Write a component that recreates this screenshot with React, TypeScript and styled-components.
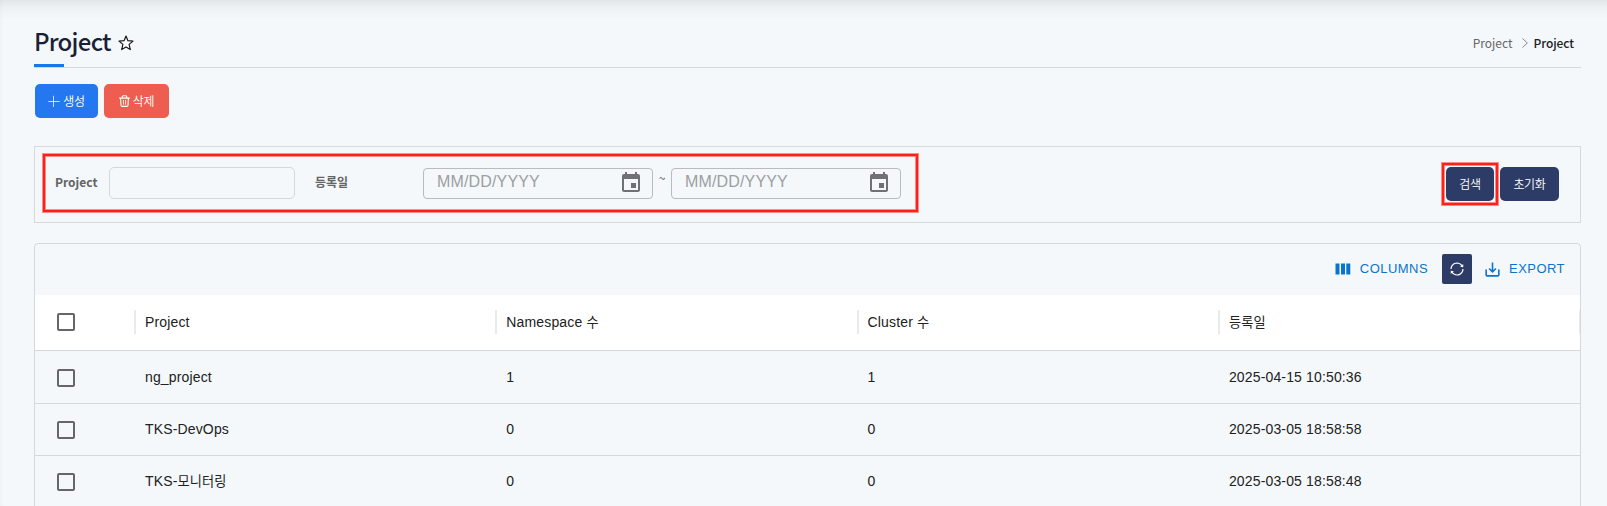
import React from 'react';
import styled, { createGlobalStyle, css } from 'styled-components';
import { AiOutlineSync } from 'react-icons/ai';

const kr = `"Noto Sans CJK KR", "Noto Sans", sans-serif`;
const latin = `"Liberation Sans", "Noto Sans CJK KR", sans-serif`;
const line = '#d6d9db';

const GlobalStyle = createGlobalStyle`
  * { box-sizing: border-box; }
  body { margin: 0; background: #f4f8fb; overflow: hidden; }
`;

const Page = styled.main`
  height: 506px;
  padding: 0 26px 0 34px;
  overflow: hidden;
  font-family: ${kr};
  color: #212121;
  background:
    linear-gradient(to bottom, rgba(60, 70, 75, 0.1), rgba(60, 70, 75, 0.035) 8px, rgba(60, 70, 75, 0) 20px),
    linear-gradient(to right, rgba(60, 70, 75, 0.025), rgba(60, 70, 75, 0) 4px),
    #f4f8fb;
`;

const PageHeader = styled.header`
  position: relative;
  height: 68px;
  border-bottom: 1px solid #d3d8dd;
  display: flex;
  align-items: flex-start;
  justify-content: space-between;
  &::after {
    content: '';
    position: absolute;
    left: 0;
    bottom: 0;
    width: 30px;
    height: 3px;
    background: #1977ee;
  }
`;

const TitleGroup = styled.div`
  display: flex;
  align-items: center;
  gap: 7px;
  padding-top: 23px;
  svg { margin-top: 3px; }
`;

const Title = styled.h1`
  margin: 0;
  font-size: 24px;
  line-height: 36px;
  font-weight: 500;
  letter-spacing: -0.75px;
  color: #1b1f36;
`;

const Breadcrumb = styled.nav`
  display: flex;
  align-items: center;
  padding: 33px 7px 0 0;
  font-size: 12px;
  line-height: 20px;
  color: #666;
  svg { margin: 0 6px 0 9px; }
  strong { font-weight: 500; letter-spacing: -0.08px; color: #222; }
`;

const Actions = styled.div`
  display: flex;
  gap: 6px;
  padding: 16px 0 0 1px;
`;

const Button = styled.button<{ $bg: string; $w: number }>`
  display: flex;
  align-items: center;
  justify-content: center;
  gap: 3px;
  width: ${(p) => p.$w}px;
  height: 34px;
  padding: 0;
  border: 0;
  border-radius: 5px;
  background: ${(p) => p.$bg};
  color: #fff;
  font: 350 12px/18px ${kr};
  letter-spacing: -0.3px;
`;

const SearchPanel = styled.section`
  position: relative;
  display: flex;
  align-items: flex-start;
  height: 77px;
  margin-top: 28px;
  padding: 20px 21px 0 20px;
  border: 1px solid #d8d9da;
`;

const Label = styled.label<{ $w: number }>`
  width: ${(p) => p.$w}px;
  font-size: 12px;
  line-height: 30px;
  font-weight: 700;
  color: #646464;
`;

const TextInput = styled.input`
  width: 186px;
  height: 32px;
  margin-right: 20px;
  border: 1px solid #d5d8da;
  border-radius: 5px;
  background: transparent;
`;

const DateField = styled.div`
  display: flex;
  align-items: center;
  justify-content: space-between;
  width: 230px;
  height: 31px;
  margin-top: 1px;
  padding: 0 9px 0 13px;
  border: 1px solid #b9bcbe;
  border-radius: 4px;
  font: 16px/26px ${latin};
  letter-spacing: 0.15px;
  color: #9c9fa1;
  span { margin-top: -3px; }
  svg { margin-top: -2px; }
`;

const Tilde = styled.span`
  width: 18px;
  text-align: center;
  font-size: 12px;
  line-height: 22px;
  color: #555;
`;

const SearchButtons = styled.div`
  display: flex;
  gap: 6px;
  margin-left: auto;
`;

const Highlight = styled.div<{ $x: number; $y: number; $w: number; $h: number }>`
  position: absolute;
  left: ${(p) => p.$x}px;
  top: ${(p) => p.$y}px;
  width: ${(p) => p.$w}px;
  height: ${(p) => p.$h}px;
  border: 2px solid #ff2119;
  box-shadow: 0 0 0 1px rgba(255, 33, 25, 0.5), inset 0 0 0 1px rgba(255, 33, 25, 0.5);
  pointer-events: none;
`;

const Grid = styled.section`
  height: 280px;
  margin-top: 20px;
  border: 1px solid ${line};
  border-radius: 4px;
  font-family: ${latin};
  font-size: 14px;
  letter-spacing: 0.15px;
`;

const Toolbar = styled.div`
  display: flex;
  align-items: center;
  justify-content: flex-end;
  height: 51px;
  padding: 0 15px 1px 0;
`;

const ToolButton = styled.button`
  display: flex;
  align-items: center;
  gap: 7px;
  padding: 0;
  border: 0;
  background: none;
  color: #0b74c9;
  font: 13px/20px ${latin};
  letter-spacing: 0.46px;
`;

const RefreshButton = styled.button`
  display: grid;
  place-items: center;
  width: 30px;
  height: 30px;
  margin: 0 11px 0 14px;
  padding: 0;
  border: 0;
  border-radius: 2px;
  background: #2d3c66;
  color: #fff;
`;

const Row = styled.div<{ $head?: boolean; $h: number }>`
  display: grid;
  grid-template-columns: 99px repeat(3, 361.3px) 1fr;
  align-items: start;
  height: ${(p) => p.$h}px;
  padding-top: ${(p) => (p.$head ? 15 : p.$h - 39)}px;
  border-bottom: 1px solid ${line};
  ${(p) => p.$head && css`background: #fff;`}
`;

const Cell = styled.div<{ $head?: boolean }>`
  padding-left: 11px;
  height: 24px;
  line-height: 24px;
  ${(p) => p.$head && css`
    border-left: 2px solid #e9eaeb;
    padding-left: 9px;
    &:last-child { border-right: 1px solid #e9eaeb; }
  `}
`;

const Hangul = styled.span`
  font-size: 13.2px;
`;

const CheckCell = styled.div`
  padding: 3px 0 0 22px;
`;

const Checkbox = styled.span<{ $drop?: boolean }>`
  display: block;
  width: 18px;
  height: 18px;
  margin-top: ${(p) => (p.$drop ? 1 : 0)}px;
  border: 2px solid #646668;
  border-radius: 2px;
`;

const CalendarIcon = () => (
  <svg width="24" height="24" viewBox="0 0 24 24" fill="#6f7173">
    <path d="M17 12h-5v5h5v-5zM16 1v2H8V1H6v2H5c-1.11 0-1.99.9-1.99 2L3 19c0 1.1.89 2 2 2h14c1.1 0 2-.9 2-2V5c0-1.1-.9-2-2-2h-1V1h-2zm3 18H5V8h14v11z" />
  </svg>
);

const ColumnsIcon = () => (
  <svg width="20" height="20" viewBox="0 0 20 20" fill="currentColor">
    <path d="M2.5 4.6h4v10.8h-4zM8 4.6h4v10.8H8zM13.3 4.6h4v10.8h-4z" />
  </svg>
);

const ExportIcon = () => (
  <svg width="19" height="19" viewBox="0 0 24 24" fill="currentColor">
    <path d="M19 12v7H5v-7H3v7c0 1.1.9 2 2 2h14c1.1 0 2-.9 2-2v-7h-2zm-6 .67l2.59-2.58L17 11.5l-5 5-5-5 1.41-1.41L11 12.67V3h2z" />
  </svg>
);

const Chevron = () => (
  <svg width="6" height="10" viewBox="0 0 6 10" fill="none" stroke="#888" strokeWidth="1">
    <path d="M0.5 0.5 L5.3 5 L0.5 9.5" />
  </svg>
);

const StarIcon = () => (
  <svg width="16" height="16" viewBox="0 0 16 16" fill="#fff" stroke="#16181c" strokeWidth="1.2" strokeLinejoin="round">
    <path d="M8 1 L9.9 5.7 L15 6.1 L11.1 9.4 L12.3 14.6 L8 11.9 L3.7 14.6 L4.9 9.4 L1 6.1 L6.1 5.7 Z" />
  </svg>
);

const PlusIcon = () => (
  <svg width="12" height="12" viewBox="0 0 12 12" stroke="#fff" strokeWidth="0.9" strokeOpacity="0.85">
    <path d="M0.3 6.5 H11.7 M5.5 0.8 V12" />
  </svg>
);

const TrashIcon = () => (
  <svg width="11" height="12" viewBox="0 0 11 12" fill="none" stroke="#fff" strokeLinecap="round" strokeLinejoin="round">
    <path d="M0.6 3.1 H10.4 M3.2 3 V1.7 Q3.2 0.7 4.2 0.7 H6.8 Q7.8 0.7 7.8 1.7 V3 M1.6 3.2 L2 10.2 Q2.1 11.4 3.3 11.4 H7.7 Q8.9 11.4 9 10.2 L9.4 3.2" strokeWidth="1.1" />
    <path d="M4.4 5.3 V9.2 M6.6 5.3 V9.2" strokeWidth="0.9" />
  </svg>
);

const rows = [
  { name: 'ng_project', ns: 1, cl: 1, date: '2025-04-15 10:50:36' },
  { name: 'TKS-DevOps', ns: 0, cl: 0, date: '2025-03-05 18:58:58' },
  { name: <>TKS-<Hangul>모니터링</Hangul></>, ns: 0, cl: 0, date: '2025-03-05 18:58:48' },
];

export default function App() {
  return (
    <>
      <GlobalStyle />
      <Page>
        <PageHeader>
          <TitleGroup>
            <Title>Project</Title>
            <StarIcon />
          </TitleGroup>
          <Breadcrumb>
            <span>Project</span>
            <Chevron />
            <strong>Project</strong>
          </Breadcrumb>
        </PageHeader>
        <Actions>
          <Button $bg="#2477ee" $w={63}><PlusIcon />생성</Button>
          <Button $bg="#ef5d51" $w={65}><TrashIcon />삭제</Button>
        </Actions>
        <SearchPanel>
          <Label $w={54}>Project</Label>
          <TextInput aria-label="Project" />
          <Label $w={108}>등록일</Label>
          <DateField><span>MM/DD/YYYY</span><CalendarIcon /></DateField>
          <Tilde>~</Tilde>
          <DateField><span>MM/DD/YYYY</span><CalendarIcon /></DateField>
          <SearchButtons>
            <Button $bg="#2d3c66" $w={48}>검색</Button>
            <Button $bg="#2d3c66" $w={59}>초기화</Button>
          </SearchButtons>
          <Highlight $x={8} $y={7} $w={875} $h={58} />
          <Highlight $x={1407} $y={16} $w={56} $h={42} />
        </SearchPanel>
        <Grid>
          <Toolbar>
            <ToolButton><ColumnsIcon />COLUMNS</ToolButton>
            <RefreshButton aria-label="Refresh"><AiOutlineSync size={16} /></RefreshButton>
            <ToolButton><ExportIcon />EXPORT</ToolButton>
          </Toolbar>
          <Row $head $h={56}>
            <CheckCell><Checkbox /></CheckCell>
            <Cell $head>Project</Cell>
            <Cell $head>Namespace <Hangul>수</Hangul></Cell>
            <Cell $head>Cluster <Hangul>수</Hangul></Cell>
            <Cell $head><Hangul>등록일</Hangul></Cell>
          </Row>
          {rows.map((r, i) => (
            <Row key={i} $h={i === 0 ? 53 : 52}>
              <CheckCell><Checkbox $drop /></CheckCell>
              <Cell>{r.name}</Cell>
              <Cell>{r.ns}</Cell>
              <Cell>{r.cl}</Cell>
              <Cell>{r.date}</Cell>
            </Row>
          ))}
        </Grid>
      </Page>
    </>
  );
}
